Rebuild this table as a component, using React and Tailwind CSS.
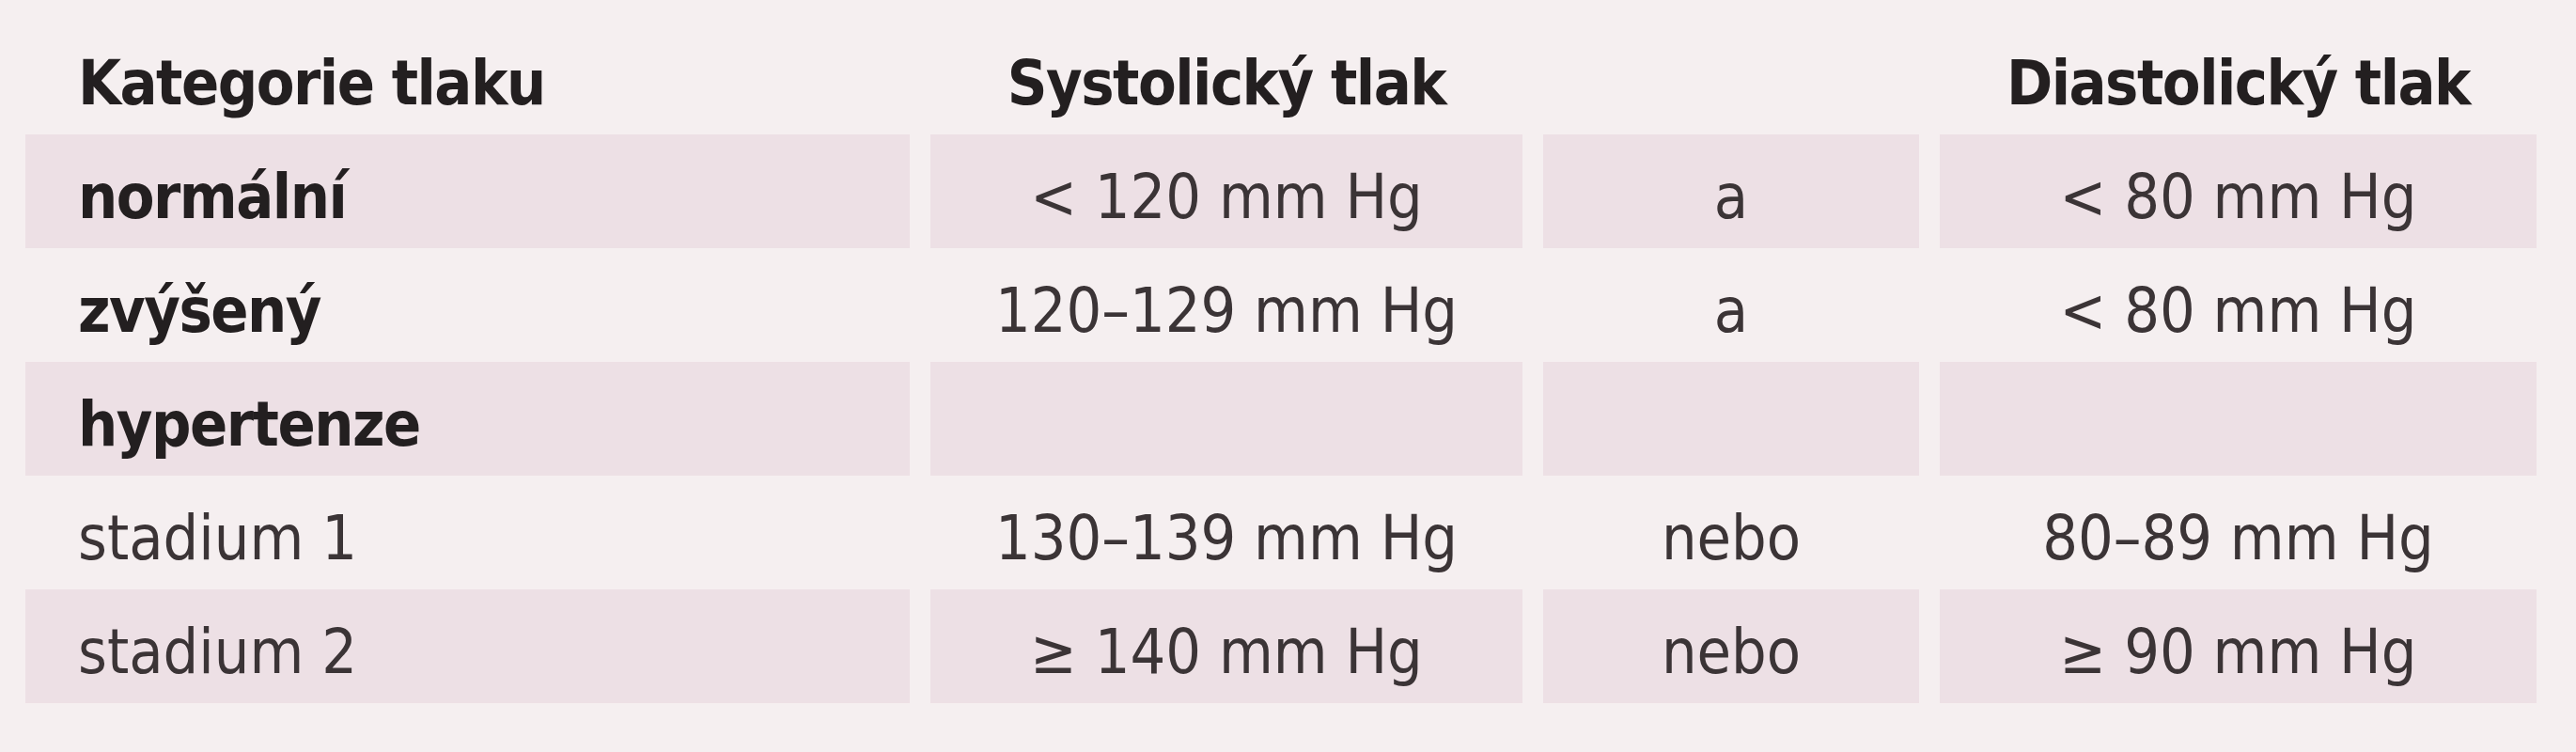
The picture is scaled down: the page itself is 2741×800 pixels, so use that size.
const rows = [
  { label: "normální", bold: true, sys: "< 120 mm Hg", op: "a", dia: "< 80 mm Hg", shaded: true },
  { label: "zvýšený", bold: true, sys: "120–129 mm Hg", op: "a", dia: "< 80 mm Hg", shaded: false },
  { label: "hypertenze", bold: true, sys: "", op: "", dia: "", shaded: true },
  { label: "stadium 1", bold: false, sys: "130–139 mm Hg", op: "nebo", dia: "80–89 mm Hg", shaded: false },
  { label: "stadium 2", bold: false, sys: "≥ 140 mm Hg", op: "nebo", dia: "≥ 90 mm Hg", shaded: true },
];

const Cell = ({ className, shaded, children }) => (
  <div className={`h-[121px] pt-[34px] leading-none ${shaded ? "bg-[#ede0e5]" : ""} ${className}`}>
    {children}
  </div>
);

const App = () => {
  return (
    <div className="w-[2741px] h-[800px] bg-[#f5eff0] pt-[22px] pl-[27px] font-['DejaVu_Sans_Condensed','Liberation_Sans_Narrow',sans-serif] text-[66px] text-[#3b3436]">
      <div className="grid grid-cols-[941px_630px_400px_635px] gap-x-[22px]">
        {/* header */}
        <Cell className="pl-[56px] font-bold tracking-[-1.5px] text-[#231f20]">Kategorie tlaku</Cell>
        <Cell className="text-center font-bold tracking-[-1.5px] text-[#231f20]">Systolický tlak</Cell>
        <Cell />
        <Cell className="text-center font-bold tracking-[-1.5px] text-[#231f20]">Diastolický tlak</Cell>

        {rows.map((r) => (
          <>
            <Cell
              key={r.label}
              shaded={r.shaded}
              className={`pl-[56px] ${r.bold ? "font-bold tracking-[-1.5px] text-[#231f20]" : ""}`}
            >
              {r.label}
            </Cell>
            <Cell shaded={r.shaded} className="text-center">
              {r.sys}
            </Cell>
            <Cell shaded={r.shaded} className="text-center">
              {r.op}
            </Cell>
            <Cell shaded={r.shaded} className="text-center">
              {r.dia}
            </Cell>
          </>
        ))}
      </div>
    </div>
  );
};

export default App;
